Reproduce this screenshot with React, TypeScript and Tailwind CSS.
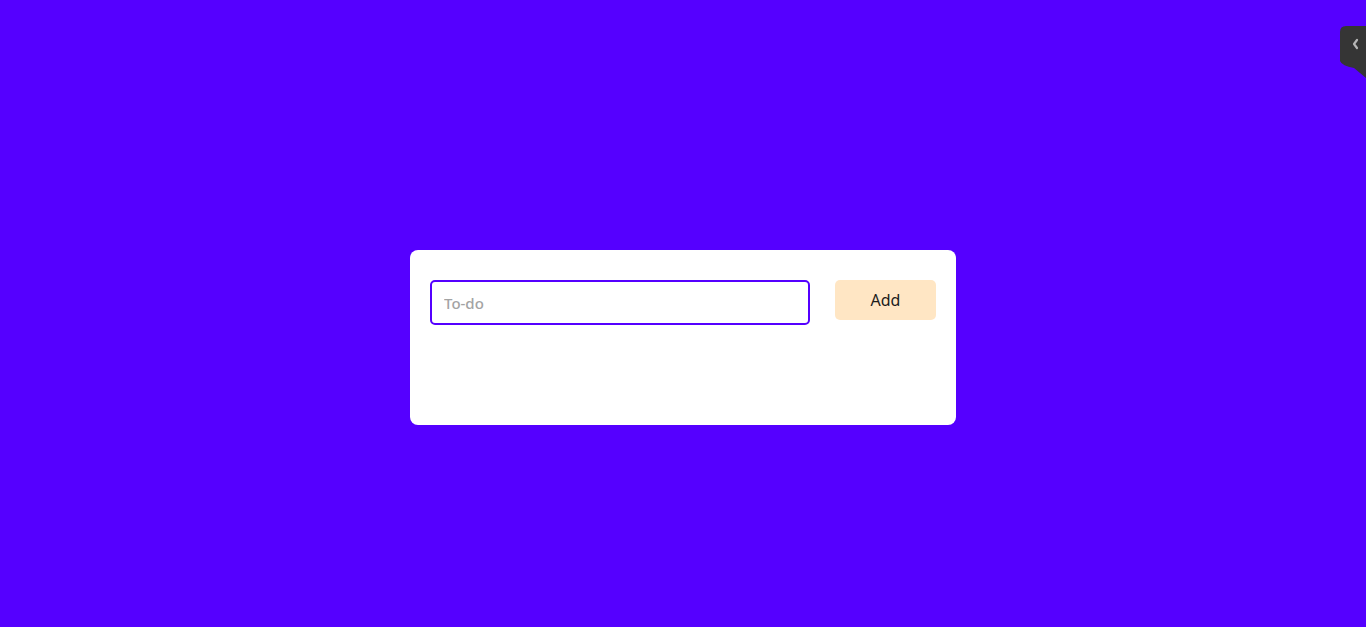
import React, { useState } from 'react';

export default function App() {
  const [todo, setTodo] = useState('');

  return (
    <div className="relative h-[627px] w-full overflow-hidden bg-[#5500ff] font-['Noto_Sans',sans-serif]">
      <div className="flex justify-center pt-[250px]">
        {/* Card */}
        <div className="w-[546px] h-[175px] rounded-lg bg-white px-5 pt-[30px]">
          <div className="flex items-start justify-between">
            <input
              value={todo}
              onChange={(e) => setTodo(e.target.value)}
              placeholder="To-do"
              className="w-[380px] h-[45px] rounded-[5px] border-2 border-[#5500ff] px-3 text-[15px] font-medium text-gray-800 outline-none placeholder:text-[#a3a3a3]"
            />
            <button className="w-[101px] h-10 rounded-[5px] bg-[#ffe6c4] text-[16px] text-[#1c1c1c]">
              Add
            </button>
          </div>
        </div>
      </div>

      {/* Side tab */}
      <div className="absolute right-0 top-[26px] w-[26px] h-[52px]">
        <svg width="26" height="52" viewBox="0 0 26 52">
          <path d="M6 0 H26 V52 L14 42 Q2 40 0 35 V6 Q0 0 6 0 Z" fill="#353535" />
          <path d="M17 14 L14 18 L17 22" stroke="#b5b5b5" strokeWidth="2.2" fill="none" strokeLinecap="round" strokeLinejoin="round" />
        </svg>
      </div>
    </div>
  );
}
